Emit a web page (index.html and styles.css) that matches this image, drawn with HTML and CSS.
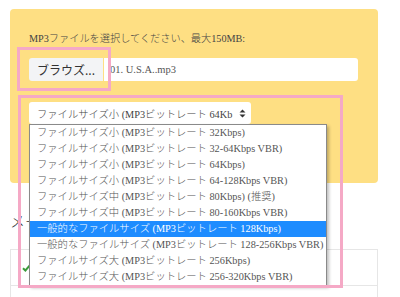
FILE: index.html
```html
<!DOCTYPE html>
<html lang="ja">
<head>
<meta charset="utf-8">
<link rel="stylesheet" href="styles.css">
</head>
<body>
<div class="wrap">
  <div class="panel">
    <p class="label">MP3ファイルを選択してください、最大150MB:</p>
    <div class="file-row">
      <span class="browse">ブラウズ...</span>
      <span class="fname">01. U.S.A..mp3</span>
    </div>
    <div class="select">
      <span class="sel-text">ファイルサイズ小 (MP3ビットレート 64Kb</span>
      <svg class="arrows" width="7" height="9" viewBox="0 0 7 9"><path d="M3.5 0.5 L6.5 3.6 H0.5 Z M3.5 8.5 L6.5 5.4 H0.5 Z" fill="#333"/></svg>
    </div>
  </div>
  <h3 class="heading">メール</h3>
  <div class="box">
    <div class="box-row"><svg class="check" width="9" height="8" viewBox="0 0 9 8"><path d="M1 4.2 L3.4 6.5 L8 1.2" stroke="#3a9a3a" stroke-width="2" fill="none"/></svg></div>
    <div class="box-row2"></div>
  </div>

  <ul class="menu">
    <li>ファイルサイズ小 (MP3ビットレート 32Kbps)</li>
    <li>ファイルサイズ小 (MP3ビットレート 32-64Kbps VBR)</li>
    <li>ファイルサイズ小 (MP3ビットレート 64Kbps)</li>
    <li>ファイルサイズ小 (MP3ビットレート 64-128Kbps VBR)</li>
    <li>ファイルサイズ中 (MP3ビットレート 80Kbps) (推奨)</li>
    <li>ファイルサイズ中 (MP3ビットレート 80-160Kbps VBR)</li>
    <li class="active">一般的なファイルサイズ (MP3ビットレート 128Kbps)</li>
    <li>一般的なファイルサイズ (MP3ビットレート 128-256Kbps VBR)</li>
    <li>ファイルサイズ大 (MP3ビットレート 256Kbps)</li>
    <li>ファイルサイズ大 (MP3ビットレート 256-320Kbps VBR)</li>
  </ul>
  <div class="hl hl-browse"></div>
  <div class="hl hl-select"></div>
</div>
</body>
</html>
```

FILE: styles.css
```css
html, body {
  margin: 0;
  padding: 0;
  background: #fff;
}
body {
  font-family: "Liberation Serif", "Noto Sans CJK JP", serif;
  font-weight: 300;
  color: #444;
  width: 400px;
  height: 297px;
  overflow: hidden;
}
.wrap {
  position: relative;
  padding: 9px 22px 0 10px;
}
.panel {
  background: #fedf83;
  border-radius: 4px;
  padding: 23px 20px 59px 19px;
}
.label {
  margin: 0;
  font-size: 10.2px;
  line-height: 14px;
  color: #444;
}
.file-row {
  display: flex;
  margin-top: 12px;
  height: 23px;
}
.browse {
  width: 74px;
  background: #f3f4f6;
  border-radius: 3px 0 0 3px;
  font-family: "Noto Sans CJK JP", sans-serif;
  font-weight: 400;
  font-size: 12px;
  color: #333;
  display: flex;
  align-items: center;
  justify-content: center;
}
.fname {
  flex: 1;
  margin-left: 1px;
  background: #fff;
  border-radius: 0 3px 3px 0;
  font-size: 10.5px;
  color: #555;
  display: flex;
  align-items: center;
  padding-left: 6px;
}
.select {
  margin-top: 21px;
  width: 222px;
  height: 22px;
  box-sizing: border-box;
  background: #fff;
  border-radius: 3px;
  display: flex;
  align-items: center;
  padding-left: 8px;
  font-size: 10.3px;
  color: #444;
  white-space: nowrap;
}
.sel-text {
  flex: 1;
  overflow: hidden;
}
.arrows {
  flex: none;
  margin: 0 5px 0 2px;
}
.heading {
  margin: 29px 0 0 0;
  font-size: 15px;
  line-height: 18px;
  font-weight: 300;
  color: #333;
  font-family: "Noto Sans CJK JP", sans-serif;
}
.box {
  margin-top: 19px;
  border: 1px solid #e6e6e6;
  border-bottom: none;
}
.box-row {
  height: 35px;
  border-bottom: 1px solid #e6e6e6;
  display: flex;
  align-items: center;
  padding-left: 11px;
}
.box-row2 {
  height: 20px;
}
.menu {
  position: absolute;
  left: 29px;
  top: 124px;
  margin: 0;
  padding: 0;
  list-style: none;
  width: 298px;
  background: #fff;
  border: 1px solid #8a8a8a;
  box-shadow: 2px 2px 3px rgba(0,0,0,0.25);
  box-sizing: border-box;
}
.menu li {
  height: 16px;
  line-height: 16px;
  padding-left: 7px;
  font-size: 10.3px;
  color: #555;
  white-space: nowrap;
}
.menu li.active {
  background: #1e8cff;
  color: #fff;
}
.hl {
  position: absolute;
  border: 3px solid #f5a9c6;
  box-sizing: border-box;
}
.hl-browse {
  left: 17px;
  top: 47px;
  width: 94px;
  height: 44px;
}
.hl-select {
  left: 18px;
  top: 95px;
  width: 325px;
  height: 193px;
}
```
